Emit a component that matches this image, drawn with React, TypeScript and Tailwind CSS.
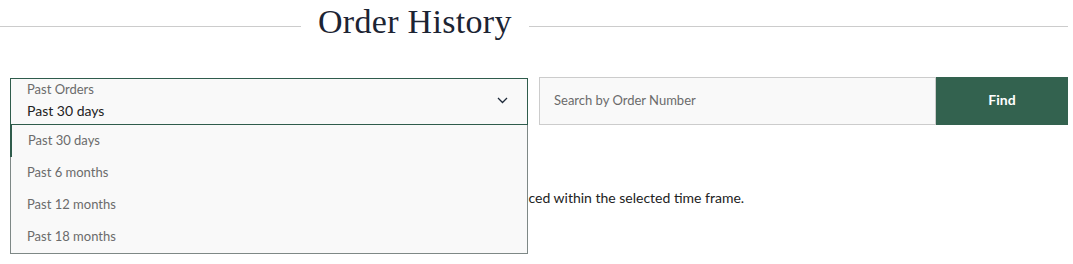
import { useState } from 'react'

const RANGES = ['Past 30 days', 'Past 6 months', 'Past 12 months', 'Past 18 months']

function Chevron() {
  return (
    <svg width="11" height="7" viewBox="0 0 11 7" fill="none" className="text-[#1e2a3a]">
      <path d="M1 1l4.5 4.5L10 1" stroke="currentColor" strokeWidth="1.3" />
    </svg>
  )
}

/** 주문 내역 검색 영역 */
export default function App() {
  const [range, setRange] = useState(RANGES[0])
  const [open, setOpen] = useState(true)
  const [query, setQuery] = useState('')

  return (
    <main className="min-h-[264px] w-[1068px] bg-white font-['Lato','Noto_Sans',sans-serif] text-[#222]">
      {/* 제목 */}
      <header className="flex items-start">
        <span className="mt-[26px] h-px w-[301px] bg-[#cccccc]" />
        <h1 className="px-[17px] font-['Liberation_Serif',serif] text-[34px] leading-[44px] tracking-[0.3px] text-[#1c2433]">
          Order History
        </h1>
        <span className="mt-[26px] h-px flex-1 bg-[#cccccc]" />
      </header>

      {/* 필터 / 검색 */}
      <div className="mt-[33px] flex items-start">
        <div className="relative ml-[10px] mt-px w-[518px]">
          <button
            type="button"
            onClick={() => setOpen(!open)}
            className="flex h-[47px] w-full items-center justify-between border border-[#2f5c4c] bg-[#f9f9f9] pb-[2px] pl-4 pr-[19px] text-left"
          >
            <span className="flex flex-col">
              <span className="text-[13px] leading-[16px] text-[#6b6b6b]">Past Orders</span>
              <span className="mt-[5px] text-[14px] leading-[18px] text-[#222]">{range}</span>
            </span>
            <Chevron />
          </button>

          {open && (
            <ul className="absolute left-0 top-full z-10 w-full border-x border-b border-[#7e8886] bg-[#f9f9f9]">
              {RANGES.map((r) => (
                <li
                  key={r}
                  onClick={() => {
                    setRange(r)
                    setOpen(false)
                  }}
                  className={
                    r === range
                      ? '-ml-px flex h-[32px] cursor-pointer items-center border-l-2 border-[#2f5c4c] pl-4 text-[13px] text-[#6b6b6b]'
                      : 'flex h-[32px] cursor-pointer items-center pl-4 text-[13px] text-[#6b6b6b]'
                  }
                >
                  {r}
                </li>
              ))}
            </ul>
          )}
        </div>

        <input
          type="text"
          value={query}
          onChange={(e) => setQuery(e.target.value)}
          placeholder="Search by Order Number"
          className="ml-[11px] h-[48px] w-[397px] border border-[#cccccc] bg-[#f9f9f9] px-[14px] pb-[2px] text-[13px] text-[#222] outline-none placeholder:text-[#6b6b6b]"
        />
        <button
          type="button"
          className="h-[48px] w-[132px] bg-[#33624f] pb-[3px] text-[14px] font-bold text-white"
        >
          Find
        </button>
      </div>

      {/* 결과 없음 */}
      <p className="mt-[63px] pl-[379px] text-[14px] leading-[20px] text-[#222]">
        No orders have been placed within the selected time frame.
      </p>
    </main>
  )
}
